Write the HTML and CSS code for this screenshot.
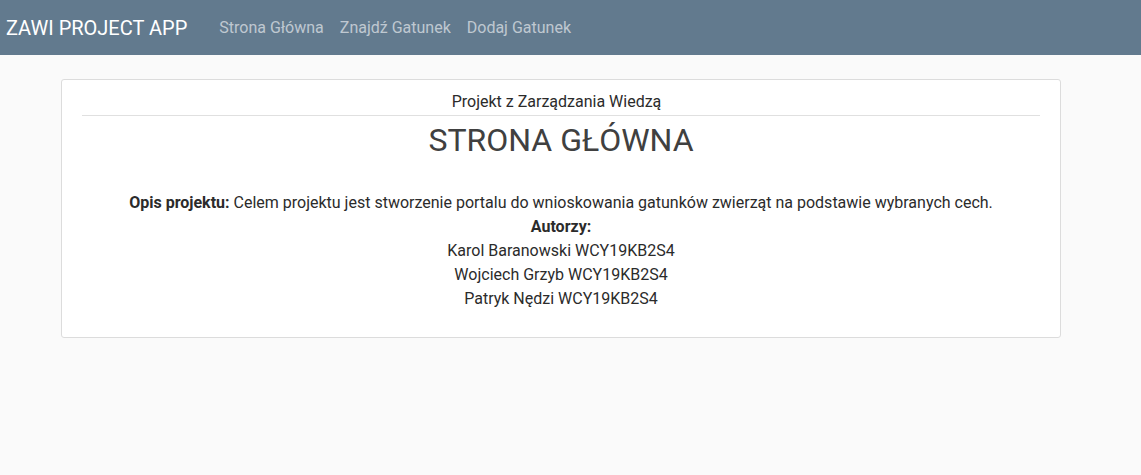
FILE: index.html
```html
<!DOCTYPE html>
<html lang="pl">
<head>
<meta charset="utf-8">
<title>ZAWI PROJECT APP</title>
<link rel="stylesheet" href="styles.css">
</head>
<body>
<nav class="navbar">
  <a class="brand" href="#">ZAWI PROJECT APP</a>
  <ul class="nav-links">
    <li><a href="#">Strona Główna</a></li>
    <li><a href="#">Znajdź Gatunek</a></li>
    <li><a href="#">Dodaj Gatunek</a></li>
  </ul>
</nav>
<main class="content">
  <section class="card">
    <div class="card-header">Projekt z Zarządzania Wiedzą</div>
    <h1 class="title">STRONA GŁÓWNA</h1>
    <div class="card-body">
      <p><strong>Opis projektu:</strong> Celem projektu jest stworzenie portalu do wnioskowania gatunków zwierząt na podstawie wybranych cech.</p>
      <p><strong>Autorzy:</strong></p>
      <p>Karol Baranowski WCY19KB2S4</p>
      <p>Wojciech Grzyb WCY19KB2S4</p>
      <p>Patryk Nędzi WCY19KB2S4</p>
    </div>
  </section>
</main>
</body>
</html>
```
FILE: styles.css
```css
* { box-sizing: border-box; }
html, body {
  margin: 0;
  padding: 0;
}
body {
  background: #fafafa;
  font-family: Roboto, "Noto Sans", sans-serif;
  font-size: 16px;
  line-height: 24px;
  color: #2b2b2b;
}
.navbar {
  height: 55px;
  background: #627a8e;
  display: flex;
  align-items: center;
  padding: 0 6px;
}
.brand {
  color: #fff;
  text-decoration: none;
  font-size: 20px;
  line-height: 30px;
  margin-right: 24px;
}
.nav-links {
  list-style: none;
  margin: 0;
  padding: 0;
  display: flex;
}
.nav-links a {
  display: block;
  padding: 0 8px;
  color: rgba(255, 255, 255, 0.6);
  text-decoration: none;
  font-size: 16px;
}
.content {
  padding: 24px 0 0 61px;
}
.card {
  width: 1000px;
  background: #fff;
  border: 1px solid #dcdcdc;
  border-radius: 3px;
  padding: 10px 20px 26px;
  text-align: center;
}
.card-header {
  padding: 0 9px 1px 0;
  border-bottom: 1px solid #e0e0e0;
}
.title {
  margin: 0;
  font-size: 32px;
  font-weight: 400;
  line-height: 48px;
  color: #404040;
  padding-bottom: 27px;
}
.card-body p {
  margin: 0;
}
.card-body strong {
  font-weight: 700;
}
```
